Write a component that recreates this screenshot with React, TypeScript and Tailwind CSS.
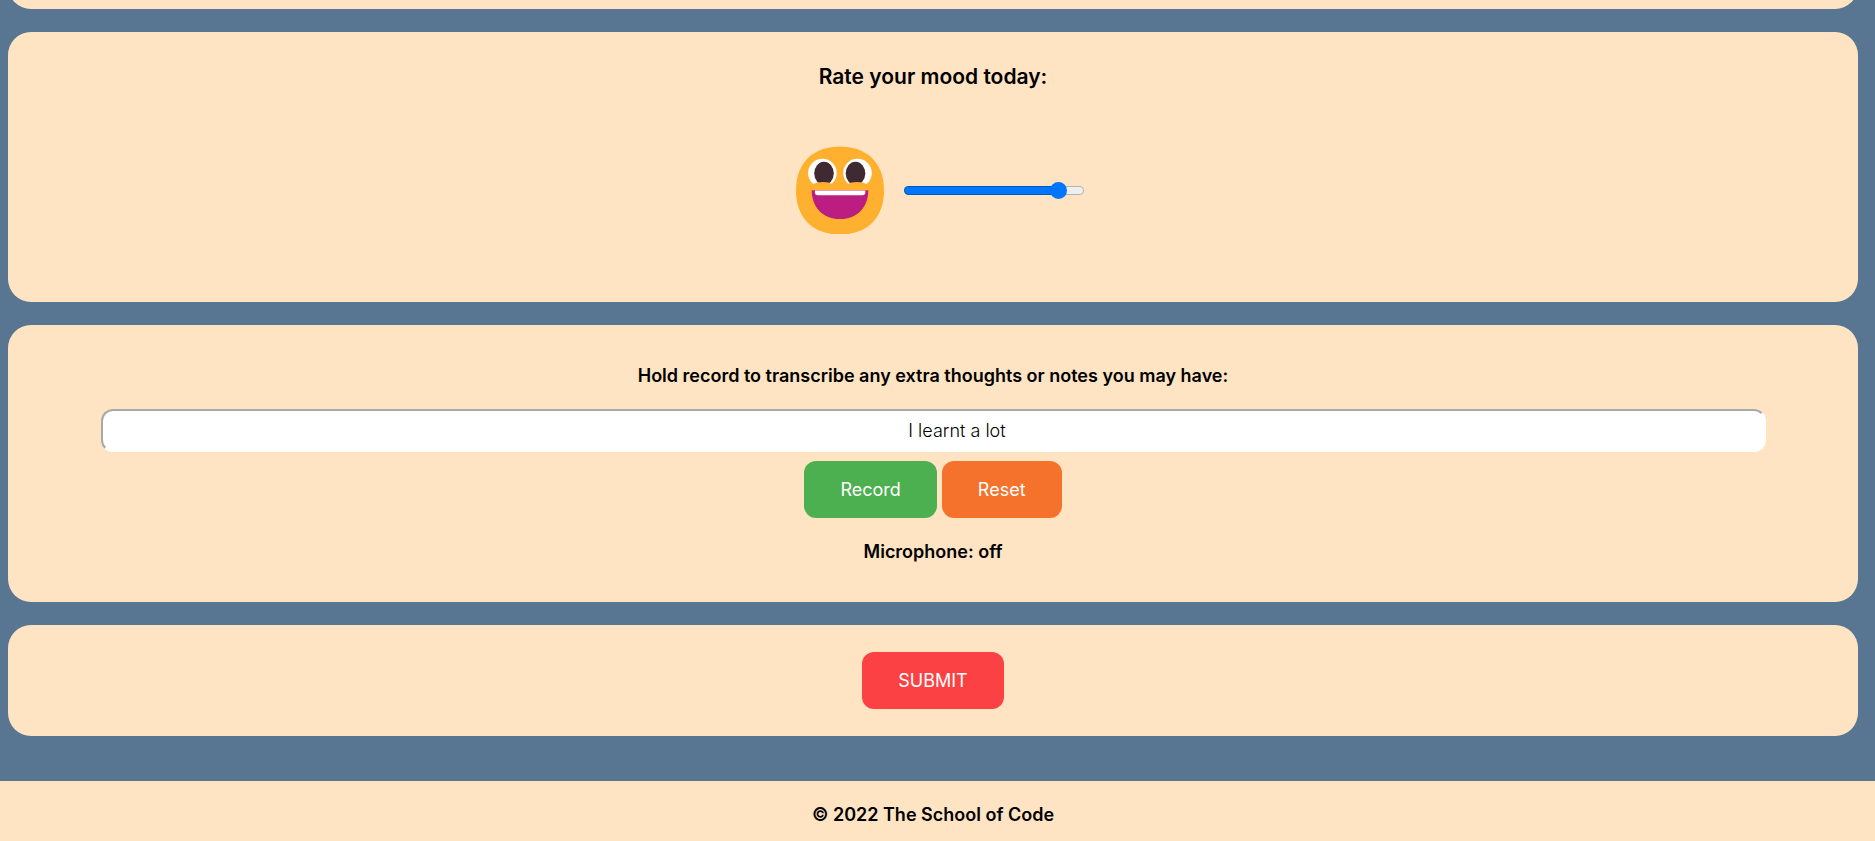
import { useState } from "react";

function GrinningFace() {
  return (
    <svg viewBox="0 0 88 88" className="size-[88px]" role="img" aria-label="Grinning face">
      <path
        d="M44 88.500C68 88.500 88 75 88 44.500C88 14 68 0.500 44 0.500C20 0.500 0 14 0 44.500C0 75 20 88.500 44 88.500Z"
        fill="#FFB02E"
      />
      <circle cx="26.400" cy="27" r="14.300" fill="#fff" />
      <circle cx="61.500" cy="27" r="14.300" fill="#fff" />
      <ellipse cx="28" cy="27.300" rx="9.800" ry="11.500" fill="#402A32" />
      <ellipse cx="59.500" cy="27.300" rx="9.800" ry="11.500" fill="#402A32" />
      <path
        d="M12 43V38.200H17C20 36.700 23 36 27 36C31 36 34 36.700 36.500 38.200H51.500C54 36.700 57 36 61 36C65 36 68 36.700 71 38.200H76V43Z"
        fill="#FFB02E"
      />
      <path d="M15.700 44.200H72.300C72.300 60 62.500 73 44 73C25.500 73 15.700 60 15.700 44.200Z" fill="#BB1D80" />
      <path
        d="M18.900 44.500H69.300V46.300C69.300 48.300 68.300 49.300 66.300 49.300H21.900C19.900 49.300 18.900 48.300 18.900 46.300Z"
        fill="#fff"
      />
    </svg>
  );
}

const card = "rounded-[23px] bg-[#ffe4c4] text-center";
const button = "h-[57px] rounded-xl px-9 text-lg text-white";

export default function App() {
  const [mood, setMood] = useState(9);
  const [note, setNote] = useState("I learnt a lot");
  const [recording, setRecording] = useState(false);

  return (
    <div className="min-h-screen overflow-hidden bg-[#587591] font-[Inter,sans-serif] text-lg text-black">
      <main className="flex flex-col gap-[23px] pr-[17px] pl-2">
        <div className="-mt-12 h-[57px] rounded-[23px] bg-[#ffe4c4]" />

        <section className={`${card} pt-[31px] pb-[68px]`}>
          <h3 className="text-[21px] leading-7 font-semibold">
            <label htmlFor="mood">Rate your mood today:</label>
          </h3>
          <div className="mt-[55px] flex items-center justify-center gap-5 pl-3.5">
            <GrinningFace />
            <input
              id="mood"
              type="range"
              min={0}
              max={10}
              value={mood}
              onChange={(e) => setMood(Number(e.target.value))}
              style={{
                backgroundImage: `linear-gradient(to right, #0075ff ${mood * 10}%, #efefef ${mood * 10}%)`,
              }}
              className="h-[9px] w-[180px] appearance-none rounded-full border border-black/25 bg-origin-border [&::-webkit-slider-thumb]:size-[17px] [&::-webkit-slider-thumb]:appearance-none [&::-webkit-slider-thumb]:rounded-full [&::-webkit-slider-thumb]:bg-[#0075ff]"
            />
          </div>
        </section>

        <section className={`${card} pt-[37px] pb-9`}>
          <label htmlFor="note" className="block leading-7 font-semibold">
            Hold record to transcribe any extra thoughts or notes you may have:
          </label>
          <input
            id="note"
            type="text"
            value={note}
            onChange={(e) => setNote(e.target.value)}
            className="mx-auto mt-[19px] block h-[43px] w-[90%] rounded-xl border-2 border-t-[#a9a9a9] border-r-white border-b-white border-l-[#a9a9a9] bg-white pl-12 text-center font-light"
          />
          <div className="mt-[9px] flex justify-center gap-[5px]">
            <button
              type="button"
              className={`${button} bg-[#4caf50]`}
              onMouseDown={() => setRecording(true)}
              onMouseUp={() => setRecording(false)}
            >
              Record
            </button>
            <button type="button" className={`${button} bg-[#f4722b]`} onClick={() => setNote("")}>
              Reset
            </button>
          </div>
          <p className="mt-5 leading-7 font-semibold">Microphone: {recording ? "on" : "off"}</p>
        </section>

        <section className={`${card} py-[27px]`}>
          <button type="submit" className={`${button} mx-auto block bg-[#fb4143]`}>
            SUBMIT
          </button>
        </section>
      </main>

      <footer className="mt-[45px] bg-[#ffe4c4] pt-5 pr-[9px] pb-3 text-center leading-7 font-semibold">
        © 2022 The School of Code
      </footer>
    </div>
  );
}
